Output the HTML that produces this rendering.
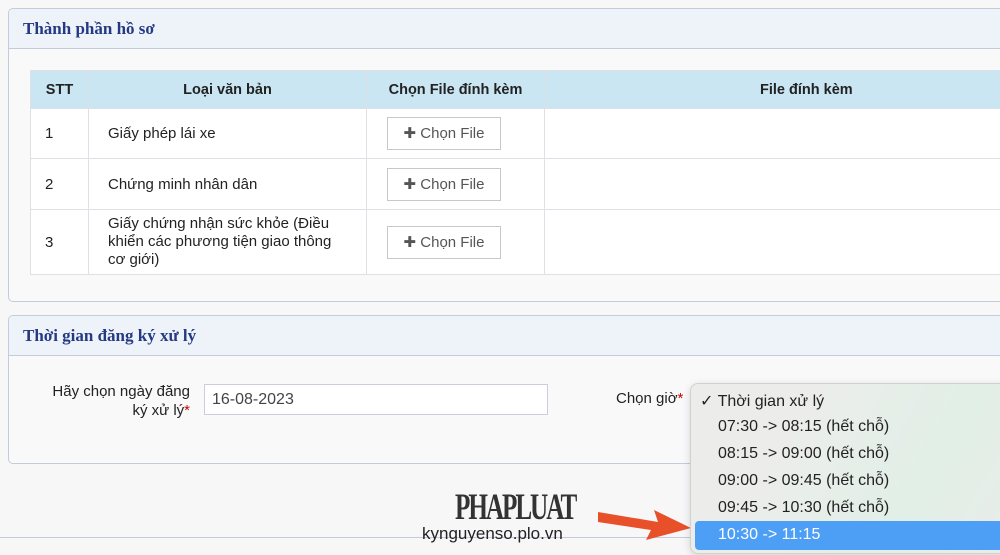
<!DOCTYPE html>
<html><head><meta charset="utf-8"><style>
body{margin:0;width:1000px;height:555px;overflow:hidden;background:#f7f7f8;font-family:"Liberation Sans",Arial,sans-serif;position:relative;color:#222}
.panel{position:absolute;left:8px;width:1010px;border:1px solid #c3cbdc;border-radius:5px;background:#f9f9fa}
.ph{height:39px;border-bottom:1px solid #c3cbdc;background:#eef3fa;border-radius:5px 5px 0 0;font-family:"Liberation Serif",serif;font-weight:bold;color:#243a82;font-size:17px;line-height:40px;padding-left:14px}
table{position:absolute;left:21px;top:61px;border-collapse:collapse;font-size:15px;table-layout:fixed;width:1100px}
td,th{border:1px solid #dde1e6;padding:0}
th{background:#c9e6f2;height:37px;font-weight:bold;font-size:14.5px}
td{background:#fff}
.btn{display:inline-block;border:1px solid #c8c8c8;width:112px;height:31px;line-height:31px;text-align:center;color:#555;font-size:15px;background:#fff}
.abs{position:absolute}
.it{position:absolute;left:718px;font-size:16px;color:#222}
</style></head><body>
<div class="panel" style="top:8px;height:292px"><div class="ph">Thành phần hồ sơ</div>
<table>
<colgroup><col style="width:58px"><col style="width:278px"><col style="width:178px"><col></colgroup>
<tr><th>STT</th><th>Loại văn bản</th><th>Chọn File đính kèm</th><th style="text-align:left;padding-left:215px">File đính kèm</th></tr>
<tr style="height:50px"><td style="padding-left:14px">1</td><td style="padding-left:19px">Giấy phép lái xe</td><td style="padding-left:20px"><span class="btn">✚ Chọn File</span></td><td></td></tr>
<tr style="height:51px"><td style="padding-left:14px">2</td><td style="padding-left:19px">Chứng minh nhân dân</td><td style="padding-left:20px"><span class="btn">✚ Chọn File</span></td><td></td></tr>
<tr style="height:65px"><td style="padding-left:14px">3</td><td style="padding-left:19px;padding-right:18px;line-height:18px">Giấy chứng nhận sức khỏe (Điều khiển các phương tiện giao thông cơ giới)</td><td style="padding-left:20px"><span class="btn">✚ Chọn File</span></td><td></td></tr>
</table></div>
<div class="panel" style="top:315px;height:147px"><div class="ph">Thời gian đăng ký xử lý</div></div>
<div class="abs" style="left:40px;top:382px;width:150px;text-align:right;font-size:15px;line-height:19px">Hãy chọn ngày đăng ký xử lý<span style="color:#c00">*</span></div>
<div class="abs" style="left:204px;top:384px;background:#fff;font-size:16px;line-height:30px;padding-left:7px;box-sizing:border-box;width:344px;height:31px;border:1px solid #c9d0dc;color:#444">16-08-2023</div>
<div class="abs" style="left:616px;top:390px;font-size:15px">Chọn giờ<span style="color:#c00">*</span></div>
<div class="abs" style="left:0;top:537px;width:1000px;height:1px;background:#c3cbdc"></div>
<div class="abs" style="left:455px;top:486px;font-family:'Liberation Serif',serif;font-size:37px;font-weight:bold;color:#333;letter-spacing:-3px;transform:scaleX(0.68);transform-origin:left">PHAPLUAT</div>
<div class="abs" style="left:422px;top:524px;font-size:17px;color:#222">kynguyenso.plo.vn</div>
<svg class="abs" style="left:596px;top:500px" width="100" height="40"><path d="M2 12 L62 22 L58 10 L95 28 L50 40 L55 30 L2 22Z" fill="#e8502a"/></svg>
<div class="abs" style="left:690px;top:383px;width:320px;height:169px;border:1px solid #cfd3d0;border-radius:8px;background:linear-gradient(120deg,#ecedeb 30%,#e1efe6 70%,#e9ece9);box-shadow:0 2px 8px rgba(0,0,0,.15)"></div>
<div class="it" style="left:700px;top:391px">✓ Thời gian xử lý</div>
<div class="it" style="top:418px">07:30 -&gt; 08:15 (hết chỗ)</div>
<div class="it" style="top:445px">08:15 -&gt; 09:00 (hết chỗ)</div>
<div class="it" style="top:472px">09:00 -&gt; 09:45 (hết chỗ)</div>
<div class="it" style="top:499px">09:45 -&gt; 10:30 (hết chỗ)</div>
<div class="abs" style="left:695px;top:521px;width:320px;height:29px;background:#4d9ff6;border-radius:4px"></div>
<div class="it" style="top:526px;color:#fff">10:30 -&gt; 11:15</div>
</body></html>
